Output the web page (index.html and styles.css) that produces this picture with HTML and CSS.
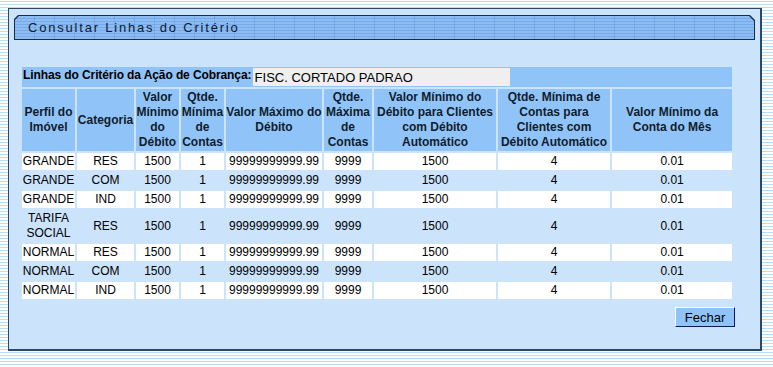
FILE: index.html
```html
<!DOCTYPE html>
<html lang="pt-BR">
<head>
    <meta charset="UTF-8">
    <title>Consultar Linhas do Critério</title>
    <link rel="stylesheet" href="styles.css">
</head>
<body>
    <div class="panel">
        <div class="title-bar">
            <div class="title-inner">Consultar Linhas do Critério</div>
        </div>

        <table class="grid">
            <colgroup>
                <col class="c1"><col class="c2"><col class="c3"><col class="c4"><col class="c5">
                <col class="c6"><col class="c7"><col class="c8"><col class="c9">
            </colgroup>
            <tr>
                <td colspan="9" class="criterio">
                    Linhas do Critério da Ação de Cobrança:
                    <input type="text" class="campo" value="FISC. CORTADO PADRAO" readonly>
                </td>
            </tr>
            <tr class="head">
                <th>Perfil do Imóvel</th>
                <th>Categoria</th>
                <th>Valor Mínimo do Débito</th>
                <th>Qtde. Mínima de Contas</th>
                <th>Valor Máximo do Débito</th>
                <th>Qtde. Máxima de Contas</th>
                <th>Valor Mínimo do Débito para Clientes com Débito Automático</th>
                <th>Qtde. Mínima de Contas para Clientes com Débito Automático</th>
                <th>Valor Mínimo da Conta do Mês</th>
            </tr>
            <tr class="par">
                <td>GRANDE</td><td>RES</td><td>1500</td><td>1</td><td>99999999999.99</td><td>9999</td><td>1500</td><td>4</td><td>0.01</td>
            </tr>
            <tr>
                <td>GRANDE</td><td>COM</td><td>1500</td><td>1</td><td>99999999999.99</td><td>9999</td><td>1500</td><td>4</td><td>0.01</td>
            </tr>
            <tr class="par">
                <td>GRANDE</td><td>IND</td><td>1500</td><td>1</td><td>99999999999.99</td><td>9999</td><td>1500</td><td>4</td><td>0.01</td>
            </tr>
            <tr>
                <td>TARIFA SOCIAL</td><td>RES</td><td>1500</td><td>1</td><td>99999999999.99</td><td>9999</td><td>1500</td><td>4</td><td>0.01</td>
            </tr>
            <tr class="par">
                <td>NORMAL</td><td>RES</td><td>1500</td><td>1</td><td>99999999999.99</td><td>9999</td><td>1500</td><td>4</td><td>0.01</td>
            </tr>
            <tr>
                <td>NORMAL</td><td>COM</td><td>1500</td><td>1</td><td>99999999999.99</td><td>9999</td><td>1500</td><td>4</td><td>0.01</td>
            </tr>
            <tr class="par">
                <td>NORMAL</td><td>IND</td><td>1500</td><td>1</td><td>99999999999.99</td><td>9999</td><td>1500</td><td>4</td><td>0.01</td>
            </tr>
        </table>

        <div class="acoes">
            <button type="button" class="botao">Fechar</button>
        </div>
    </div>
</body>
</html>
```

FILE: styles.css
```css
body {
    margin: 0;
    padding: 8px;
    height: 367px;
    box-sizing: border-box;
    font-family: "Liberation Sans", Arial, sans-serif;
    font-size: 12px;
    color: #000;
    background: repeating-linear-gradient(#ffffff 0 1px, #b8dcf6 1px 2px, #ffffff 2px 3px);
}
.panel {
    width: 754px;
    height: 343px;
    box-sizing: border-box;
    background: #cbe3fb;
    border: 1px solid #2b4866;
    border-right-width: 2px;
    border-bottom-width: 2px;
    padding: 6px 4px 0 5px;
}
.title-bar {
    height: 25px;
    margin-right: 1px;
    background: #1c2c44;
    clip-path: polygon(4px 0, calc(100% - 5px) 0, 100% 5px, 100% 100%, 0 100%, 0 4px);
    padding: 1px;
    box-sizing: border-box;
}
.title-inner {
    height: 23px;
    clip-path: polygon(4px 0, calc(100% - 5px) 0, 100% 5px, 100% 100%, 0 100%, 0 4px);
    background:
        repeating-linear-gradient(90deg, transparent 0 19px, rgba(90,140,200,0.35) 19px 20px),
        repeating-linear-gradient(#8dbdf3 0 2px, #77aae9 2px 3px);
    font-size: 13px;
    letter-spacing: 1.8px;
    line-height: 23px;
    padding-left: 13px;
    color: #0d1a30;
}
.grid {
    margin: 25px 0 0 6px;
    width: 714px;
    table-layout: fixed;
    border-spacing: 2px;
}
.c1 { width: 53px; }
.c2 { width: 57px; }
.c3 { width: 43px; }
.c4 { width: 43px; }
.c5 { width: 96px; }
.c6 { width: 48px; }
.c7 { width: 122px; }
.c8 { width: 112px; }
.c9 { width: 120px; }
.grid td, .grid th {
    padding: 1px 0;
    line-height: 15px;
    text-align: center;
    vertical-align: middle;
}
.grid td.criterio {
    background: #90c4f8;
    text-align: left;
    font-weight: bold;
    letter-spacing: -0.1px;
    padding: 1px 1px;
    height: 18px;
    white-space: nowrap;
}
.campo {
    width: 257px;
    height: 18px;
    box-sizing: border-box;
    margin: 0 0 0 -2px;
    padding: 0 2px;
    border: none;
    background: #efefef;
    font-family: "Liberation Sans", Arial, sans-serif;
    font-size: 13px;
    letter-spacing: 0;
    color: #000;
    vertical-align: top;
}
.head th {
    background: #90c4f8;
    font-weight: bold;
    height: 60px;
    color: #101c2c;
}
.par td {
    background: #ffffff;
}
.acoes {
    width: 715px;
    margin: 6px 0 0 6px;
    display: flex;
    justify-content: flex-end;
}
.botao {
    width: 60px;
    height: 20px;
    padding: 0;
    background: #90c4f8;
    border: 1px solid;
    border-color: #ffffff #0b1a5e #0b1a5e #ffffff;
    font-family: "Liberation Sans", Arial, sans-serif;
    font-size: 13px;
    color: #000;
}
```
